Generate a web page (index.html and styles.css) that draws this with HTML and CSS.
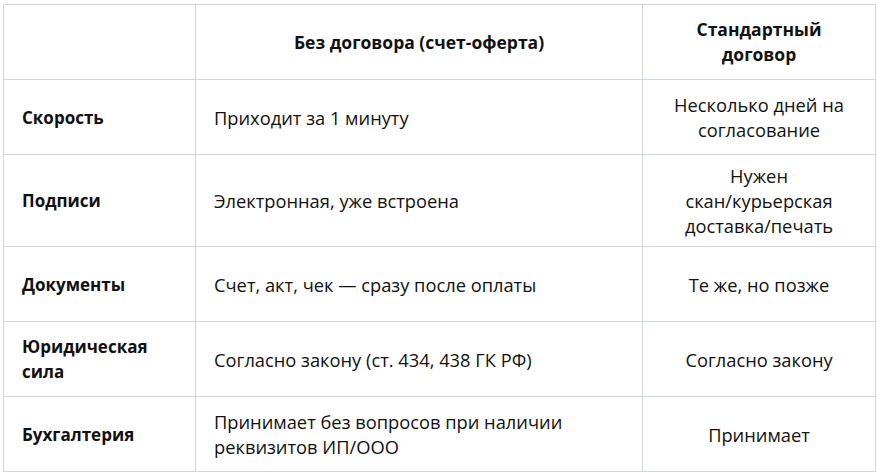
FILE: index.html
```html
<!DOCTYPE html>
<html lang="ru">
<head>
<meta charset="utf-8">
<link rel="stylesheet" href="styles.css">
</head>
<body>
<table class="cmp">
  <colgroup>
    <col class="c1"><col class="c2"><col class="c3">
  </colgroup>
  <thead>
    <tr>
      <th></th>
      <th class="center">Без договора (счет-оферта)</th>
      <th class="center">Стандартный<br>договор</th>
    </tr>
  </thead>
  <tbody>
    <tr>
      <th class="label">Скорость</th>
      <td>Приходит за 1 минуту</td>
      <td class="center">Несколько дней на<br>согласование</td>
    </tr>
    <tr>
      <th class="label">Подписи</th>
      <td>Электронная, уже встроена</td>
      <td class="center">Нужен<br>скан/курьерская<br>доставка/печать</td>
    </tr>
    <tr>
      <th class="label">Документы</th>
      <td>Счет, акт, чек — сразу после оплаты</td>
      <td class="center">Те же, но позже</td>
    </tr>
    <tr>
      <th class="label">Юридическая<br>сила</th>
      <td>Согласно закону (ст. 434, 438 ГК РФ)</td>
      <td class="center">Согласно закону</td>
    </tr>
    <tr>
      <th class="label">Бухгалтерия</th>
      <td>Принимает без вопросов при наличии<br>реквизитов ИП/ООО</td>
      <td class="center">Принимает</td>
    </tr>
  </tbody>
</table>
</body>
</html>
```
FILE: styles.css
```css
html, body {
  margin: 0;
  padding: 0;
  background: #ffffff;
}
body {
  padding: 4px 3px 0 3px;
  font-family: "Open Sans", "Noto Sans", sans-serif;
  color: #111;
}
.cmp {
  border-collapse: collapse;
  width: 872px;
  table-layout: fixed;
  font-size: 18.3px;
  line-height: 25px;
}
.c1 { width: 192px; }
.c2 { width: 447px; }
.c3 { width: 233px; }
.cmp th, .cmp td {
  border: 1px solid #d1d5dc;
  height: 58px;
  padding: 8px 18px;
  vertical-align: middle;
  text-align: left;
  font-weight: 400;
}
.cmp thead th {
  font-weight: 700;
  font-size: 17.5px;
}
.cmp th.label {
  font-weight: 700;
  font-size: 17px;
}
.cmp .center {
  text-align: center;
}
```
